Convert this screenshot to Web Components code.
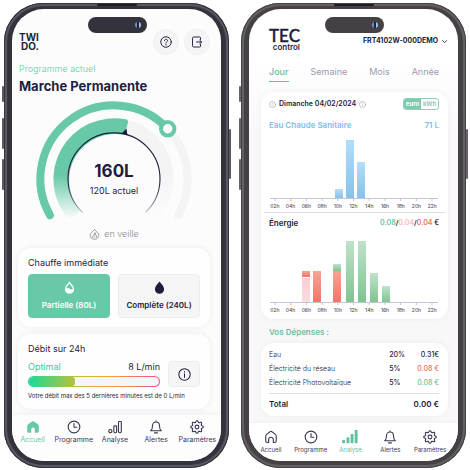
<!DOCTYPE html>
<html lang="fr">
<head>
<meta charset="utf-8">
<title>Twido – TEC control</title>
<style>
  html { height: 100%; background: #fff; }
  body {
    margin: 0; min-height: 100%; box-sizing: border-box; padding: 3px 4px 2px;
    display: grid; grid-template-columns: 1fr 1fr; gap: 12px;
    font-family: Inter, "Open Sans", sans-serif; color: #1f1d3d;
    --green: #68c9a9; --ink: #1f1d3d; --case: #34323b; --rim: #5b5964; --tab-size: 7px;
  }
  .tec { --case: #444044; --rim: #666267; --green: #64c0a2; --tab-size: 6px; }
</style>
</head>
<body>
<phone-frame class="twido"><twido-screen></twido-screen></phone-frame>
<phone-frame class="tec"><tec-screen></tec-screen></phone-frame>

<script>
const define = (name, html) => customElements.define(name, class extends HTMLElement {
  connectedCallback() {
    if (this.shadowRoot) return;
    const root = this.attachShadow({ mode: 'open' });
    root.innerHTML = typeof html === 'function' ? html(this) : html;
  }
});

const RESET = `
  * { box-sizing: border-box; }
  button, select { font: inherit; color: inherit; border: 0; padding: 0; margin: 0; background: none; cursor: pointer; }
  h1, h2, p { margin: 0; font: inherit; }
  a { color: inherit; text-decoration: none; }
`;

/* Eight-toothed cog outline, traced in polar coordinates around (12, 12). */
const cog = Array.from({ length: 96 }, (_, i) => {
  const a = i * Math.PI / 48, r = 9.4 + 1.4 * Math.cos(8 * a);
  return (12 + r * Math.cos(a)).toFixed(2) + ' ' + (12 + r * Math.sin(a)).toFixed(2);
}).join('L');

const ICONS = {
  'home-solid': '<path fill="currentColor" stroke="none" d="M12 1.500 4.500 6.500Q2 8.200 2 11v8.500A2.500 2.500 0 0 0 4.500 22H9v-6a3 3 0 0 1 6 0v6h4.500a2.500 2.500 0 0 0 2.500-2.500V11q0-2.800-2.500-4.500z"/>',
  home: '<path d="M10.500 2.800Q12 1.800 13.500 2.800l6 4.700q1.500 1.200 1.500 3v8q0 3-2.500 3H16v-5a4 4 0 0 0-8 0v5H5.500q-2.500 0-2.500-3v-8q0-1.800 1.500-3z"/>',
  clock: '<circle cx="12" cy="12" r="10"/><path d="M12 6v6.500h5"/>',
  bars: '<circle cx="4" cy="19" r="2.800"/><rect x="10" y="10" width="4.800" height="11.800" rx="1.500"/><rect x="18" y="2.500" width="4.800" height="19.300" rx="1.500"/>',
  'bars-solid': '<g fill="currentColor" stroke="none"><rect x="-1.500" y="17" width="5" height="5.500" rx="1"/><rect x="6" y="12.500" width="5" height="10" rx="1"/><rect x="13" y="7" width="5" height="15.500" rx="1"/><rect x="20" y="0" width="5" height="22.500" rx="1"/></g>',
  bell: '<path d="M12 1.500v2M3 18.500h18c-2.500-2-3-4-3-8.500 0-4-2.500-6.500-6-6.500S6 6 6 10c0 4.500-.5 6.500-3 8.500zM9.500 22h5"/>',
  gear: `<path d="M${cog}z"/><circle cx="12" cy="12" r="3.300"/>`,
  help: '<circle cx="12" cy="12" r="10.500"/><path d="M9 9.500c0-1.800 1.300-3 3-3s3 1.100 3 2.800c0 2.200-3 2.200-3 4.500M12 16.500v1.500"/>',
  exit: '<path d="M19 7V3.500A1.500 1.500 0 0 0 17.500 2h-12A2.500 2.500 0 0 0 3 4.500v15A2.500 2.500 0 0 0 5.500 22h12a1.500 1.500 0 0 0 1.500-1.500V17M11 12h10m-3.500-3.500L21.500 12l-4 3.500"/>',
  info: '<circle cx="12" cy="12" r="10.500"/><path d="M12 10.500V17M12 6.500v1"/>',
  'drop-half': '<path fill="#fff" stroke="none" fill-rule="evenodd" d="M12 1C9 5 3.500 9.500 3.500 15a8.500 8.500 0 0 0 17 0C20.500 9.500 15 5 12 1zm-5.800 13C6.500 10.500 9.500 8 12 5.200c2.500 3 5.600 5.600 5.800 10.300-3 .8-4.600-.3-6-1.500-1.700-1.400-3.600-1.500-5.600 0z"/>',
  drop: '<path fill="currentColor" stroke="none" d="M12 1C9 5 3.500 9.500 3.500 15a8.500 8.500 0 0 0 17 0C20.500 9.500 15 5 12 1z"/>',
  standby: '<path d="M12 1.500C9 5 2.500 9 2.500 14a9.500 8.500 0 0 0 19 0c0-5-6.500-9-9.500-12.500z"/><path d="m8 18 1-3.500M10.500 15 13 8l1.500 5M16 14l1 4M11.500 18h1.500"/>',
  prev: '<circle cx="12" cy="12" r="10.500"/><path d="m14 7-4.500 5 4.500 5"/>',
  next: '<circle cx="12" cy="12" r="10.500"/><path d="m10 7 4.500 5-4.500 5"/>',
  chevron: '<path d="m2 7 10 10L22 7"/>'
};

define('ui-icon', el => `<style>
  :host { display: inline-flex; flex: none; width: 14px; height: 14px; }
  svg { width: 100%; height: 100%; overflow: visible; }
</style><svg viewBox="0 0 24 24" aria-hidden="true" fill="none" stroke="currentColor" stroke-width="${el.getAttribute('weight') || 1.9}" stroke-linecap="round" stroke-linejoin="round">${ICONS[el.getAttribute('name')]}</svg>`);

define('phone-frame', `<style>
  :host {
    position: relative; display: flex; box-sizing: border-box; min-width: 0;
    padding: 6px 8px 7px; border-radius: 39px; background: var(--case);
    box-shadow: inset 0 0 0 1px var(--case), inset 0 0 1px 3px var(--rim);
  }
  .screen { flex: 1; min-width: 0; display: flex; border-radius: 32px; overflow: hidden; background: #fcfcfd; }
  ::slotted(*) { flex: 1; min-width: 0; }
  .island {
    position: absolute; top: 14px; left: 50%; margin-left: -29px; width: 59px; height: 16px; border-radius: 8px;
    background: var(--case);
  }
  .island::after {
    content: ""; position: absolute; right: 6px; top: 5px; width: 6px; height: 6px; border-radius: 50%;
    background: linear-gradient(90deg, #6f8cc8 40%, #1c2233 40% 60%, #a5c2f0 60%);
  }
  .speaker { position: absolute; top: 1px; left: 50%; margin-left: -20px; width: 40px; height: 2px; border-radius: 1px; background: #1f1d22; }
  i { position: absolute; width: 2px; left: -2px; height: 31px; border-radius: 1px; background: var(--rim); }
  .k1 { top: 83px; height: 16px; } .k2 { top: 115px; } .k3 { top: 156px; }
  .k4 { left: auto; right: -2px; top: 126px; height: 50px; }
</style>
<i class="k1"></i><i class="k2"></i><i class="k3"></i><i class="k4"></i>
<div class="screen"><slot></slot></div>
<div class="speaker"></div><div class="island"></div>`);

define('icon-tab', el => `<style>${RESET}
  :host { display: block; flex: 1 1 0; min-width: 0; color: #3a3852; }
  :host([active]) { color: var(--green); }
  a { display: flex; flex-direction: column; align-items: center; gap: 2px; font-size: var(--tab-size); line-height: 8px; white-space: nowrap; }
</style><a href="#"><ui-icon name="${el.getAttribute('icon')}"></ui-icon><span><slot></slot></span></a>`);

define('tab-bar', `<style>
  :host { display: flex; flex: 1; padding: 5px 3px 0 0; background: #fdfdfe; box-shadow: 0 -1px 6px rgba(40,40,60,.06); }
</style><slot></slot>`);

define('soft-card', `<style>
  :host { display: block; box-sizing: border-box; border-radius: 13px; background: #fefefe; box-shadow: 0 0 6px rgba(40,40,60,.08); }
</style><slot></slot>`);

define('water-gauge', `<style>
  :host { display: grid; justify-items: center; }
  svg, .read { grid-area: 1 / 1; }
  svg { width: 156px; height: 120px; overflow: visible; }
  .read { display: flex; flex-direction: column; gap: 4px; align-items: center; padding-top: 60px; }
  b { font-size: 17px; line-height: 20px; }
  span { font-size: 9px; line-height: 12px; }
</style>
<svg viewBox="0 0 156 120" fill="none" role="slider" aria-label="Volume d'eau chaude" aria-valuemin="0" aria-valuemax="240" aria-valuenow="160">
  <defs>
    <linearGradient id="fill" gradientUnits="userSpaceOnUse" x1="0" y1="74" x2="0" y2="118"><stop stop-color="#68c9a9"/><stop offset="1" stop-color="#68c9a9" stop-opacity="0"/></linearGradient>
    <linearGradient id="rest" gradientUnits="userSpaceOnUse" x1="0" y1="70" x2="0" y2="118"><stop stop-color="#f4f4f5"/><stop offset="1" stop-color="#f4f4f5" stop-opacity="0"/></linearGradient>
    <linearGradient id="dial" gradientUnits="userSpaceOnUse" x1="0" y1="80" x2="0" y2="124"><stop stop-color="#1f1d3d"/><stop offset="1" stop-color="#1f1d3d" stop-opacity="0"/></linearGradient>
  </defs>
  <path d="M131.700 27.800A73.500 73.500 0 0 1 142 114.200" stroke="#f4f4f5" stroke-width="8" stroke-linecap="round"/>
  <path d="M14 114.200A73.500 73.500 0 0 1 131.700 27.800" stroke="var(--green)" stroke-width="8" stroke-linecap="round"/>
  <path d="M90 18.500L88.500 34A46 46 0 0 1 110 111.500L122 118.500A61 61 0 0 0 91 18.500z" fill="url(#rest)"/>
  <path d="M88.500 34.100A46 46 0 0 0 44.500 109.500L33.500 119.500A61 61 0 0 1 90 18.300Q92.500 19 92 21.500z" fill="url(#fill)"/>
  <path d="M46.500 111.400A46 46 0 1 1 109.500 111.400" stroke="url(#dial)" stroke-width="1.100"/>
  <path d="M85.500 32.800 90.500 27.500 91.500 34.500z" fill="#1f1d3d"/>
  <circle cx="131.700" cy="27.800" r="6.700" fill="#fff" stroke="var(--green)" stroke-width="4"/>
</svg>
<div class="read"><b>160L</b><span>120L actuel</span></div>`);

define('twido-screen', `<style>${RESET}
  :host { display: flex; flex-direction: column; color: var(--ink); }
  main { padding: 20px 11px 6px 6px; display: flex; flex-direction: column; }
  header { display: flex; align-items: center; gap: 5px; padding-left: 1px; }
  .logo { margin-right: auto; font: 700 10px/9px Inter, sans-serif; text-align: right; }
  .round { width: 26px; height: 26px; border-radius: 50%; background: #f5f5f6; border: 1px solid #efeff1; display: grid; place-items: center; }
  .round ui-icon { width: 12px; height: 12px; }
  .prog { font-size: 9px; font-weight: 300; line-height: 12px; color: var(--green); margin: 8px 0 2px 1px; }
  h1 { font-size: 13px; font-weight: 700; line-height: 18px; margin-left: 1px; white-space: nowrap; }
  water-gauge { margin-top: 6px; }
  .state { display: flex; justify-content: center; align-items: center; gap: 4px; margin: 6px 0 7px; font-size: 9px; font-weight: 300; line-height: 14px; color: #85858e; }
  .state ui-icon { width: 11px; height: 11px; }
  soft-card { padding: 9px 10px; }
  soft-card + soft-card { margin-top: 7px; padding-bottom: 8px; }
  h2 { font-size: 9px; line-height: 12px; white-space: nowrap; }
  .modes { display: grid; grid-template-columns: 1fr 1fr; gap: 8px; margin-top: 5px; }
  .modes button { height: 44px; border-radius: 4px; display: flex; flex-direction: column; align-items: center; justify-content: center; gap: 5px; font-weight: 600; font-size: 8px; line-height: 12px; white-space: nowrap; background: #f5f5f6; border: 1px solid #ededf0; }
  .modes button.on { background: var(--green); border-color: var(--green); color: #fff; }
  .modes ui-icon { width: 13px; height: 13px; }
  .flow { display: grid; grid-template-columns: 1fr 32px; gap: 8px; margin-top: 6px; }
  .vals { display: flex; justify-content: space-between; font-size: 9px; line-height: 12px; }
  .vals span:first-child { color: #3dc79b; }
  .bar { height: 11px; margin-top: 3px; border-radius: 6px; padding: 1px; background: linear-gradient(90deg, #1cd996, #b5c23c 35%, #f2a53a 60%, #ee4f86); }
  .bar div { height: 9px; border-radius: 5px; background: #f6f6f7; overflow: hidden; }
  .bar div::before { content: ""; display: block; width: 35%; height: 100%; border-radius: 0 3px 3px 0; background: linear-gradient(90deg, #1cd996, #b5c23c); }
  .info { border-radius: 4px; background: #f5f5f6; border: 1px solid #ededf0; display: grid; place-items: center; }
  .info ui-icon { width: 13px; height: 13px; }
  .note { font-size: 6px; line-height: 10px; margin-top: 4px; white-space: nowrap; }
</style>
<main>
  <header>
    <div class="logo">TWI<br>DO.</div>
    <button class="round" aria-label="Aide"><ui-icon name="help"></ui-icon></button>
    <button class="round" aria-label="Quitter"><ui-icon name="exit"></ui-icon></button>
  </header>
  <p class="prog">Programme actuel</p>
  <h1>Marche Permanente</h1>
  <water-gauge></water-gauge>
  <p class="state"><ui-icon name="standby" weight="1.700"></ui-icon>en veille</p>
  <soft-card>
    <h2>Chauffe immédiate</h2>
    <div class="modes">
      <button class="on"><ui-icon name="drop-half"></ui-icon>Partielle (80L)</button>
      <button><ui-icon name="drop"></ui-icon>Complète (240L)</button>
    </div>
  </soft-card>
  <soft-card>
    <h2>Débit sur 24h</h2>
    <div class="flow">
      <div>
        <div class="vals"><span>Optimal</span><span>8 L/min</span></div>
        <div class="bar" role="meter" aria-label="Débit" aria-valuemin="0" aria-valuemax="24" aria-valuenow="8"><div></div></div>
      </div>
      <button class="info" aria-label="Informations"><ui-icon name="info"></ui-icon></button>
    </div>
    <p class="note">Votre débit max des 5 dernières minutes est de 0 L/min</p>
  </soft-card>
</main>
<tab-bar>
  <icon-tab icon="home-solid" active>Accueil</icon-tab>
  <icon-tab icon="clock">Programme</icon-tab>
  <icon-tab icon="bars">Analyse</icon-tab>
  <icon-tab icon="bell">Alertes</icon-tab>
  <icon-tab icon="gear">Paramètres</icon-tab>
</tab-bar>`);

/* Hourly chart. Each entry of "bars" is x,top,bottom,colour; top and bottom are heights above the axis. */
define('hour-chart', el => {
  const h = +el.getAttribute('plot');
  const bars = el.getAttribute('bars').split(' ').map(b => {
    const [x, top, bottom, c] = b.split(',');
    return `<rect x="${x}" y="${h - top}" width="8" height="${top - bottom}" fill="url(#${c})"/>`;
  }).join('');
  const grad = (id, a, b) => `<linearGradient id="${id}" x2="0" y2="1"><stop stop-color="${a}"/><stop offset="1" stop-color="${b}"/></linearGradient>`;
  let ticks = '', labels = '';
  for (let i = 0; i < 11; i++) {
    ticks += `M${6 + i * 15.7} ${h}v3`;
    labels += `<span>${String(2 + i * 2).padStart(2, '0')}h</span>`;
  }
  return `<style>
    :host { display: block; }
    svg { display: block; width: 100%; }
    div { display: flex; margin: 2px -1px 0 -2px; font-size: 5px; line-height: 6px; font-weight: 500; color: #55546a; }
    span { flex: 1 1 0; text-align: center; }
  </style>
  <svg viewBox="0 0 170 ${h + 3}" role="img" aria-label="Consommation par heure"><defs>
    ${grad('blue', '#b3def8', '#86c1ec')}${grad('green', '#bfe2cc', '#80c48f')}${grad('red', '#f6a497', '#ee7667')}${grad('pink', '#fbcdd2', '#fadcdf')}
  </defs>${bars}<path d="M1 ${h + .5}h168${ticks}" stroke="#c6c5d0" stroke-width="1" fill="none"/></svg>
  <div>${labels}</div>`;
});

define('tec-screen', `<style>${RESET}
  :host { display: flex; flex-direction: column; color: var(--ink); background: linear-gradient(#fff 50px, #f8f8f9 130px); }
  main { padding: 20px 10px 7px 12px; display: flex; flex-direction: column; }
  header, nav { padding: 0 9px 0 8px; display: flex; justify-content: space-between; }
  .logo { text-align: right; font-weight: 600; font-size: 8px; line-height: 8px; }
  .logo b { display: block; font: 500 17px/14px Lato, sans-serif; -webkit-text-stroke: .4px; }
  .device { display: flex; align-items: center; gap: 3px; margin-right: -8px; padding-top: 2px; font-weight: 700; font-size: 7px; line-height: 12px; }
  .device select { appearance: none; }
  .device ui-icon { width: 5px; height: 5px; pointer-events: none; }
  nav { margin-top: 15px; color: #9b9aad; font-size: 9px; line-height: 12px; }
  nav button { padding-bottom: 3px; border-bottom: 1px solid transparent; }
  nav .on { color: var(--green); border-color: var(--green); font-weight: 500; }
  soft-card { margin-top: 10px; padding: 6px 9px 6px 8px; background: #fff; box-shadow: 0 0 6px rgba(40,40,60,.05); }
  .date { display: flex; align-items: center; gap: 3px; height: 12px; font-weight: 600; font-size: 7px; line-height: 12px; white-space: nowrap; }
  .date > button { display: flex; color: #9b9aad; }
  .date > button ui-icon { width: 7px; height: 7px; }
  .unit { margin-left: auto; width: 36px; height: 12px; display: grid; grid-template-columns: 1fr 1fr; border: 1px solid #8fcfb8; border-radius: 3px; overflow: hidden; font-size: 6px; line-height: 10px; color: #7fc9ad; }
  .unit .on { background: #7fc9ad; color: #fff; font-weight: 700; }
  .cap { display: flex; justify-content: space-between; font-weight: 600; font-size: 8px; line-height: 10px; }
  .cap .sums { font-size: 7px; }
  .blue { margin-top: 10px; color: #7bc0ee; }
  hr { border: 0; height: 1px; background: #dcdce2; margin: 3px -6px 5px -5px; }
  .g { color: #6dc4a4; } .p { color: #f9b7bf; } .r { color: #ee7162; }
  .head { margin: 7px 8px 0; font-weight: 600; font-size: 8px; line-height: 12px; color: var(--green); }
  soft-card.costs { margin-top: 5px; padding-top: 5px; padding-bottom: 5px; }
  table { width: 100%; border-collapse: collapse; font-size: 7px; line-height: 14px; white-space: nowrap; }
  td, th { padding: 0; text-align: left; font-weight: 300; }
  td { font-weight: 500; }
  td:nth-child(2) { width: 28px; }
  td:last-child { width: 21px; text-align: right; }
  tfoot th, tfoot td { border-top: 1px solid #dcdce2; padding-top: 3px; font-weight: 600; font-size: 8px; }
  tbody::after { content: ""; display: block; height: 3px; }
  tab-bar { padding: 7px 8px 0 2px; background: #fff; box-shadow: 0 -1px 5px rgba(40,40,60,.03); }
</style>
<main>
  <header>
    <div class="logo"><b>TEC</b>control</div>
    <label class="device"><select aria-label="Appareil"><option>FRT4102W-000DEMO</option></select><ui-icon name="chevron" weight="4"></ui-icon></label>
  </header>
  <nav><button class="on">Jour</button><button>Semaine</button><button>Mois</button><button>Année</button></nav>
  <soft-card>
    <div class="date">
      <button aria-label="Jour précédent"><ui-icon name="prev"></ui-icon></button>
      <span>Dimanche 04/02/2024</span>
      <button aria-label="Jour suivant"><ui-icon name="next"></ui-icon></button>
      <div class="unit"><button class="on">euro</button><button>kWh</button></div>
    </div>
    <div class="cap blue"><span>Eau Chaude Sanitaire</span><span>71 L</span></div>
    <hour-chart plot="68" bars="66,9,0,blue 77,58,0,blue 88,36,0,blue"></hour-chart>
    <hr>
    <div class="cap"><span>Énergie</span><span class="sums"><span class="g">0.08</span>/<span class="p">0.04</span>/<span class="r">0.04</span> €</span></div>
    <hour-chart plot="74" bars="33,24,0,pink 33,31,25,red 44,31,0,red 64,31,0,red 64,38,31,green 77,61,0,green 89,61,0,green 101,29,0,green 113,16,0,green"></hour-chart>
  </soft-card>
  <h2 class="head">Vos Dépenses :</h2>
  <soft-card class="costs">
    <table>
      <tbody>
        <tr><th scope="row">Eau</th><td>20%</td><td>0.31€</td></tr>
        <tr><th scope="row">Électricité du réseau</th><td>5%</td><td class="r">0.08 €</td></tr>
        <tr><th scope="row">Électricité Photovoltaïque</th><td>5%</td><td class="g">0.08 €</td></tr>
      </tbody>
      <tfoot><tr><th scope="row">Total</th><td colspan="2">0.00 €</td></tr></tfoot>
    </table>
  </soft-card>
</main>
<tab-bar>
  <icon-tab icon="home">Accueil</icon-tab>
  <icon-tab icon="clock">Programme</icon-tab>
  <icon-tab icon="bars-solid" active>Analyse</icon-tab>
  <icon-tab icon="bell">Alertes</icon-tab>
  <icon-tab icon="gear">Paramètres</icon-tab>
</tab-bar>`);
</script>
</body>
</html>
